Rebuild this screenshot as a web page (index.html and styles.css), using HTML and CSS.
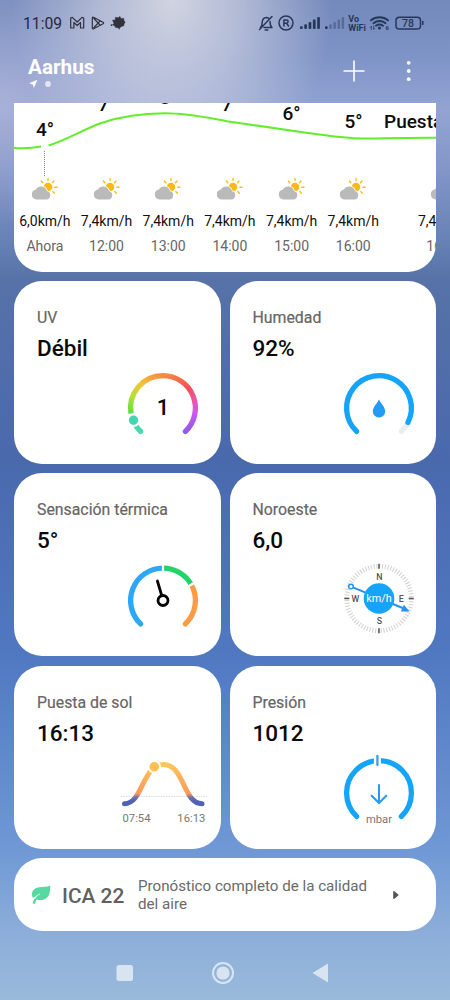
FILE: index.html
```
<!DOCTYPE html>
<html lang="es">
<head>
<meta charset="utf-8">
<title>Aarhus</title>
<link rel="stylesheet" href="styles.css">
</head>
<body>
<svg class="defs" width="0" height="0" aria-hidden="true">
  <defs>
    <symbol id="partly" viewBox="0 0 28 24">
      <g stroke="#fbbd17" stroke-width="1.4" stroke-linecap="round"><path d="M17 1.400v2M10.400 4l1.500 1.700M23 4l-1.500 1.700M23.800 10.300h2.200M21.800 14.600l1.600 1.600"/></g>
      <circle cx="17" cy="10" r="4.300" fill="#fbb917"/>
      <path d="M5.500 22.500a5 5 0 0 1-.6-9.900A6 6 0 0 1 16 13.900A4.400 4.400 0 0 1 15.500 22.500z" fill="#bababa" stroke="#fff" stroke-width="1.400" paint-order="stroke"/>
    </symbol>
  </defs>
</svg>
<main class="screen">
  <header class="top">
    <div class="status">
      <span class="clock">11:09</span>
      <svg class="apps" width="60" height="18" viewBox="0 0 60 18" fill="none" stroke="#30323c" stroke-width="1.200" stroke-linejoin="round">
        <path d="M1.700 14V4l1.600-.6L8.200 8l4.900-4.600 1.600.6v10h-3.200V8.500L8.200 11.500 4.900 8.500V14z"/>
        <path d="M24.500 3.300c-.7-.4-1.200 0-1.200.8v9.800c0 .8.600 1.200 1.300.8l9.500-5c.7-.4.700-1.100 0-1.500zM24.500 4l6.500 7M24.500 14l6.500-7"/>
        <path d="M43.500 6.200l2.700-.2.300-2.800 2.600.6L51 2.500l1 2.200 2.600-.5.400 2.600 1.200 1.200-1.200 2-.2 1.800-2.500.8-1.500 1.200-.6 1.500-1-1.600-2.600-.2-1-1.800-2-.9 1.400-1.500z" fill="#30323c" stroke-width=".5"/>
        <circle cx="42.500" cy="11.200" r=".9" fill="#30323c" stroke="none"/>
      </svg>
      <svg class="signals" width="170" height="22" viewBox="0 0 170 22" fill="none" stroke="#27375a" stroke-width="1.500" stroke-linecap="round" stroke-linejoin="round">
        <path d="M2.500 17.500L15 4.500M3.500 15.500c2-1.500 1.500-4 1.800-6 .4-2.500 2-3.800 4-4 1.200 0 2 .4 2.800 1M7 15.500h8c-2-1.400-1.800-3.400-1.900-6M8.200 18h2.600"/>
        <circle cx="29" cy="11" r="7"/>
        <path d="M26.900 14V8h2.500c2.300 0 2.300 3.200 0 3.200h-2.500M29.500 11.200L31.500 14"/>
        <g stroke="none" fill="#27375a">
          <rect x="43" y="14.200" width="2.700" height="2.800" rx="1"/><rect x="47.300" y="12.200" width="2.700" height="4.800" rx="1"/><rect x="51.600" y="10" width="2.700" height="7" rx="1"/><rect x="55.900" y="7.500" width="2.700" height="9.500" rx="1"/><rect x="60.200" y="5" width="2.700" height="12" rx="1"/>
          <rect x="68" y="14.200" width="2.700" height="2.800" rx="1"/>
          <g opacity=".38"><rect x="72.300" y="12.200" width="2.500" height="4.800" rx="1"/><rect x="76.400" y="10" width="2.500" height="7" rx="1"/><rect x="80.500" y="7.500" width="2.500" height="9.500" rx="1"/><rect x="84.600" y="5" width="2.500" height="12" rx="1"/></g>
          <text class="tiny" x="91.300" y="9.700">Vo</text><text class="tiny" x="91.300" y="18.500">WiFi</text>
          <text class="micro" x="128.500" y="17.700">6</text>
          <circle cx="122.500" cy="16" r="1.600"/>
          <text class="battery" x="151" y="15" text-anchor="middle">78</text>
        </g>
        <path d="M114 8.300c5-4 12-4 17 0M116.500 11.200c3.500-2.800 8.500-2.800 12 0M119 13.700c2.200-1.600 4.800-1.600 7 0" stroke-width="2"/>
        <path d="M114.300 14.500v3m-1-2l1-1M116.700 14v3.500l1-1" stroke-width=".8"/>
        <rect x="139" y="5.200" width="24.500" height="11.800" rx="3.300"/><path d="M165.800 9.500v3"/>
      </svg>
    </div>
    <div class="titlebar">
      <div class="place">
        <h1>Aarhus</h1>
        <svg width="24" height="10" viewBox="0 0 24 10"><path d="M9.500.7L5.800 9 4.800 5.400 1.200 4.300z" fill="#fff"/><circle cx="20" cy="5" r="2.900" fill="#fff" opacity=".68"/></svg>
      </div>
      <svg class="actions" width="80" height="30" viewBox="0 0 80 30"><path d="M3.500 15h21M14 4.500v21" stroke="#fff" stroke-width="1.600"/><g fill="#f4f7ff"><circle cx="68.700" cy="6.800" r="1.900"/><circle cx="68.700" cy="15" r="1.900"/><circle cx="68.700" cy="23.200" r="1.900"/></g></svg>
    </div>
  </header>

  <section class="forecast">
    <svg class="chart" width="422" height="74" viewBox="14 103 422 74">
      <path d="M13 147.800C23 148.800 33 148 41 146.600M48.500 145.500C68 140 83 129 103 122.500C124 115.500 143 113.600 165 113.300C188 113.300 206 117.500 227 121.200C252 125 279 129 306 132.700C330 136 345 138.500 362 138.500C380 138.500 398 137.500 437 137.700" fill="none" stroke="#62ee2c" stroke-width="2"/>
      <path d="M44.500 151v26" stroke="#888" stroke-width="1" stroke-dasharray="1 1"/>
      <g class="temps" text-anchor="middle">
        <text x="45" y="136">4°</text><text x="107" y="111">7°</text><text x="168.500" y="104">8°</text><text x="230.500" y="111">7°</text><text x="291.500" y="120">6°</text><text x="353.500" y="128">5°</text>
        <text x="384" y="128" text-anchor="start">Puesta de sol</text>
      </g>
    </svg>
    <div class="hours">
      <div class="hour"><svg><use href="#partly"/></svg><b>6,0km/h</b><span>Ahora</span></div>
      <div class="hour"><svg><use href="#partly"/></svg><b>7,4km/h</b><span>12:00</span></div>
      <div class="hour"><svg><use href="#partly"/></svg><b>7,4km/h</b><span>13:00</span></div>
      <div class="hour"><svg><use href="#partly"/></svg><b>7,4km/h</b><span>14:00</span></div>
      <div class="hour"><svg><use href="#partly"/></svg><b>7,4km/h</b><span>15:00</span></div>
      <div class="hour"><svg><use href="#partly"/></svg><b>7,4km/h</b><span>16:00</span></div>
      <div class="hour wide"><svg><use href="#partly"/></svg><b>7,4km/h</b><span>16:13</span></div>
    </div>
  </section>

  <section class="grid">
    <article class="card">
      <h2>UV</h2><p>Débil</p>
      <svg class="gauge" viewBox="-45 -45 90 90" fill="none" stroke-width="5.300" stroke-linecap="round">
        <defs>
          <linearGradient id="uvl" gradientUnits="userSpaceOnUse" x1="-30" y1="8" x2="0" y2="-32"><stop offset="0" stop-color="#59df42"/><stop offset=".3" stop-color="#b9df32"/><stop offset=".6" stop-color="#f1c536"/><stop offset="1" stop-color="#f58b43"/></linearGradient>
          <linearGradient id="uvr" gradientUnits="userSpaceOnUse" x1="0" y1="-32" x2="24" y2="26"><stop offset="0" stop-color="#f58b43"/><stop offset=".33" stop-color="#f44d57"/><stop offset=".55" stop-color="#e957a6"/><stop offset=".72" stop-color="#d358ed"/><stop offset="1" stop-color="#855bea"/></linearGradient>
        </defs>
        <path d="M-32 5.500A32.400 32.400 0 0 1 0 -32.400" stroke="url(#uvl)" stroke-linecap="butt"/>
        <path d="M0 -32.400A32.400 32.400 0 0 1 22.400 23.400" stroke="url(#uvr)"/>
        <path d="M-27.500 17.100A32.400 32.400 0 0 0 -22.400 23.400" stroke="#49d9ad"/>
        <circle cx="-29.500" cy="12.300" r="5.700" fill="#43d5b0" stroke="#fff" stroke-width="2"/>
        <text class="uv" x="0" y="7" text-anchor="middle">1</text>
      </svg>
    </article>
    <article class="card">
      <h2>Humedad</h2><p>92%</p>
      <svg class="gauge" viewBox="-45 -45 90 90" fill="none" stroke-width="5.300" stroke-linecap="round">
        <path d="M29 14.400A32.400 32.400 0 0 1 22.400 23.400" stroke="#ececee"/>
        <path d="M-22.400 23.400A32.400 32.400 0 1 1 29 14.400" stroke="#14a4fa"/>
        <path d="M0 -8.500C1.500 -5 6.200 -1 6.200 3.300A6.200 6.200 0 0 1 -6.200 3.300C-6.200 -1 -1.500 -5 0 -8.500z" fill="#219bf4"/>
      </svg>
    </article>
    <article class="card">
      <h2>Sensación térmica</h2><p>5°</p>
      <svg class="gauge" viewBox="-45 -45.500 90 90" fill="none" stroke-width="5.300" stroke-linecap="round">
        <path d="M-22.400 23.400A32.400 32.400 0 0 1 0 -32.400" stroke="#2ba8fa"/>
        <path d="M28.200 -16A32.400 32.400 0 0 1 22.400 23.400" stroke="#fa9c46"/>
        <path d="M0 -32.400A32.400 32.400 0 0 1 28.200 -16" stroke="#20d469" stroke-linecap="butt"/>
        <path d="M0 -28V-37M24.500 -13.800L32.500 -18.300" stroke="#fff" stroke-width="2.200"/>
        <g stroke="#050505" stroke-width="2.800"><circle cx="0" cy="0" r="5"/><path d="M-1.300 -5L-5.600 -19.500"/></g>
      </svg>
    </article>
    <article class="card">
      <h2>Noroeste</h2><p>6,0</p>
      <svg class="gauge" viewBox="-45 -43.500 90 90" fill="none">
        <circle r="32.300" stroke="#cfcfcf" stroke-width="4.800" stroke-dasharray="1 1.819"/>
        <path d="M0 -34.700v5M0 34.700v-5M-34.700 0h5M34.700 0h-5" stroke="#555" stroke-width="1.500"/>
        <g class="compass" text-anchor="middle"><text x=".3" y="-19">N</text><text x="-23.700" y="3.300">W</text><text x="22.300" y="3.300">E</text><text x=".3" y="25.500">S</text></g>
        <path d="M-26 -11.200L26 10.500" stroke="#2393ef" stroke-width="2"/>
        <circle cx="-28" cy="-12" r="2.300" fill="#fff" stroke="#2393ef" stroke-width="1.500"/>
        <path d="M30.500 12.900L21.800 12.900L24.900 6.300z" fill="#2393ef"/>
        <circle r="15.300" fill="#14a4fa"/>
        <text class="unit" x="0" y="3" text-anchor="middle">km/h</text>
      </svg>
    </article>
    <article class="card">
      <h2>Puesta de sol</h2><p>16:13</p>
      <svg class="gauge" viewBox="-45 -45 90 90" fill="none">
        <defs><linearGradient id="sun" gradientUnits="userSpaceOnUse" x1="0" y1="-29" x2="0" y2="8"><stop offset="0" stop-color="#ffc65c"/><stop offset=".8" stop-color="#f99a59"/><stop offset=".9" stop-color="#7470a9"/><stop offset="1" stop-color="#5061b7"/></linearGradient></defs>
        <path d="M-42 3.500H44" stroke="#ddd" stroke-width="1" stroke-dasharray="1.500 1"/>
        <path d="M-38.500 10.700C-20 10.700 -21 -28.500 .4 -28.500C21.500 -28.500 20 10.700 39 10.700" stroke="url(#sun)" stroke-width="5" stroke-linecap="round"/>
        <circle cx="-8.700" cy="-26.200" r="5.800" fill="#ffc04c" stroke="#fff" stroke-width="2"/>
        <g class="small" text-anchor="middle"><text x="-26.500" y="28.700">07:54</text><text x="28.300" y="28.700">16:13</text></g>
      </svg>
    </article>
    <article class="card">
      <h2>Presión</h2><p>1012</p>
      <svg class="gauge" viewBox="-45 -45 90 90" fill="none" stroke="#14a4fa" stroke-linecap="round">
        <path d="M-22.400 23.400A32.400 32.400 0 1 1 22.400 23.400" stroke-width="5.300"/>
        <path d="M-1.600 -38v10" stroke="#fff" stroke-width="7" stroke-linecap="butt"/><path d="M-1.600 -37v9" stroke="#3c9ce8" stroke-width="2.300"/>
        <path d="M0 -8V10M-7.300 2.800L0 10L7.300 2.800" stroke="#2998ee" stroke-width="2"/>
        <text class="small" stroke="none" x="0" y="30.300" text-anchor="middle">mbar</text>
      </svg>
    </article>
  </section>

  <section class="air">
    <svg class="leaf" width="20" height="20" viewBox="0 0 20 20"><path d="M19.200 .6C19.500 8.500 17.500 13.800 11.500 14.900C9 15.300 7 14.900 5.800 14.500C4.800 15.800 4.600 17 4.300 18.200C4 19.300 1.500 19 1.800 17.700C2 16.500 2.500 15.300 3.200 14.200L6.500 11.300L1.800 12.800C-.8 7 3 2.800 8.500 2.300C12.500 2 16 2.200 19.200 .6z" fill="#55d9a0"/><path d="M3.500 12.700C5.500 10.900 7 9.700 8.800 9" fill="none" stroke="#fff" stroke-width=".8" stroke-linecap="round"/></svg>
    <strong>ICA 22</strong>
    <p>Pronóstico completo de la calidad<br>del aire</p>
    <svg class="chevron" width="8" height="10" viewBox="0 0 8 10"><path d="M1.200 1.200v7.600h1.300L6.800 5 2.500 1.200z" fill="#555"/></svg>
  </section>

  <nav class="keys">
    <svg width="450" height="69" viewBox="0 0 450 69"><g fill="#d8e5f1"><rect x="116.500" y="34" width="16.500" height="16" rx="2.500"/><circle cx="223" cy="42" r="6.600"/><path d="M312.500 42L328 32.500V51.500z"/></g><circle cx="223" cy="42" r="10" fill="none" stroke="#d8e5f1" stroke-width="2"/></svg>
  </nav>
</main>
</body>
</html>
```
FILE: styles.css
```
* { box-sizing: border-box; }
body { margin: 0; font-family: Roboto, "Noto Sans", sans-serif; }
h1, h2, p { margin: 0; }
svg { display: block; flex: none; }
.defs { position: absolute; }
.screen {
  width: 450px;
  height: 1000px;
  overflow: hidden;
  display: flex;
  flex-direction: column;
  background:
    radial-gradient(ellipse 160px 200px at 172px 0, rgba(222, 222, 230, .88), rgba(214, 215, 228, .6) 45%, rgba(190, 196, 224, 0)),
    radial-gradient(ellipse 180px 130px at 0 95px, rgba(190, 190, 222, .5), rgba(190, 190, 222, 0)),
    linear-gradient(#7489bb 0, #8095c7 60px, #93a4d3 110px, #8296c7 170px, #6782b5 240px, #5672a7 280px, #4a69ad 460px, #5078c1 650px, #6f98d5 850px, #8badd9 930px, #9abadb 1000px);
}
.top { height: 103px; flex: none; padding: 12px 0 0 23px; }
.status { height: 22px; display: flex; align-items: center; }
.clock { width: 39px; font-size: 15.700px; color: #262a38; }
.apps { margin-left: 7px; }
.signals { margin-left: 128px; }
.tiny { font-size: 9px; font-weight: 700; }
.micro { font-size: 6px; font-weight: 700; }
.battery { font-size: 10.500px; font-weight: 500; }
.titlebar { display: flex; justify-content: space-between; padding: 20px 30px 0 5px; }
.place h1 { font-size: 20.700px; line-height: 26px; font-weight: 700; color: #fff; }
.place svg { margin-top: -1px; }
.actions { margin-top: 2px; }
.forecast { flex: none; width: 422px; height: 168.500px; margin-left: 14px; background: #fff; border-radius: 0 0 28px 28px; overflow: hidden; }
.temps { font-size: 19px; font-weight: 500; fill: #0c0c0c; }
.hours { display: flex; }
.hour { flex: none; width: 61.700px; display: flex; flex-direction: column; align-items: center; }
.hour svg { width: 28px; height: 24px; }
.hour b { font-size: 14px; font-weight: 400; line-height: 20px; margin-top: 10px; color: #111; }
.hour span { font-size: 14px; line-height: 20px; margin-top: 5px; color: #666; }
.wide { width: 119px; }
.grid { flex: none; display: grid; grid-template-columns: 206.500px 206.500px; grid-auto-rows: 183px; gap: 9.500px 9px; padding: 9px 0 0 14px; }
.card { background: #fff; border-radius: 28px; padding: 27px 0 0 23px; }
.card h2 { font-size: 15.850px; line-height: 20px; font-weight: 400; color: #666; -webkit-text-stroke: .2px #666; }
.card p { font-size: 22.500px; line-height: 30px; margin-top: 5px; font-weight: 500; color: #0a0a0a; }
.gauge { width: 90px; height: 90px; margin-left: 81px; overflow: visible; }
.uv { font-size: 22px; font-weight: 500; fill: #0a0a0a; }
.compass { font-size: 8.800px; font-weight: 500; fill: #555; }
.unit { font-size: 10.800px; fill: #fff; }
.small { font-size: 11.200px; fill: #777; }
.air { flex: none; width: 422px; height: 73px; margin: 9.500px 0 0 14px; padding-left: 17px; display: flex; align-items: center; background: #fff; border-radius: 28px; }
.air strong { width: 76px; margin-left: 11px; font-size: 20.900px; font-weight: 500; color: #606060; padding-top: 2px; }
.air p { width: 254px; font-size: 15.150px; line-height: 17.500px; color: #6a6a6a; padding-top: 2px; }
.keys { height: 69px; }
```
